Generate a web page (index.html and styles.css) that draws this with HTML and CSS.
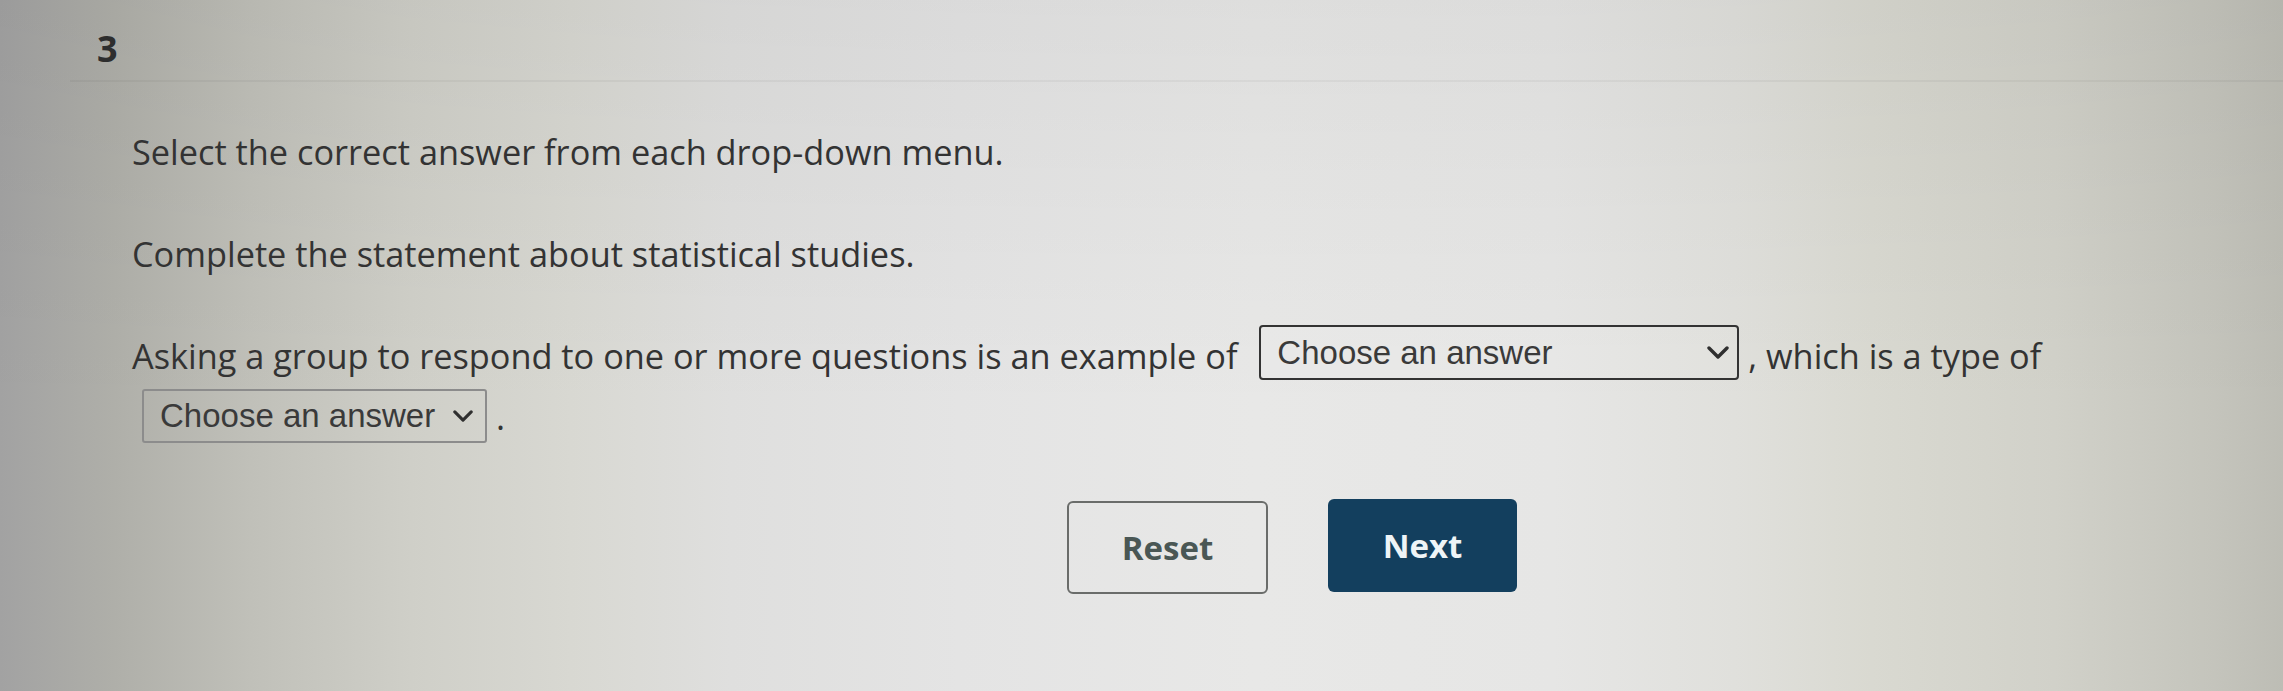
FILE: index.html
```html
<!DOCTYPE html>
<html lang="en">
<head>
<meta charset="utf-8">
<title>Question 3</title>
<link rel="stylesheet" href="styles.css">
</head>
<body>
<div class="page">
  <header class="qhead">
    <span class="qnum">3</span>
  </header>
  <main class="qbody">
    <p class="instr">Select the correct answer from each drop-down menu.</p>
    <p class="prompt">Complete the statement about statistical studies.</p>
    <p class="statement">Asking a group to respond to one or more questions is an example of <span class="dd dd-wide"><span class="dd-text">Choose an answer</span><svg class="chev" viewBox="0 0 22 13" width="22" height="13"><path d="M2 2 L11 11 L20 2" fill="none" stroke="#2f2f2f" stroke-width="3.4" stroke-linecap="round" stroke-linejoin="round"/></svg></span> , which is a type of <span class="dd dd-small"><span class="dd-text">Choose an answer</span><svg class="chev" viewBox="0 0 22 13" width="20" height="12"><path d="M2 2 L11 11 L20 2" fill="none" stroke="#2f2f2f" stroke-width="3.4" stroke-linecap="round" stroke-linejoin="round"/></svg></span> .</p>
    <div class="actions">
      <button class="btn btn-reset" type="button">Reset</button>
      <button class="btn btn-next" type="button">Next</button>
    </div>
  </main>
</div>
</body>
</html>
```

FILE: styles.css
```css
html, body {
  margin: 0;
  padding: 0;
}
body {
  width: 2283px;
  height: 691px;
  overflow: hidden;
  font-family: "Open Sans", "Noto Sans", sans-serif;
  color: #333;
  background:
    linear-gradient(to bottom, rgba(0,0,0,0.045) 0%, rgba(0,0,0,0.02) 30%, rgba(0,0,0,0) 60%),
    linear-gradient(to right,
      #a2a2a2 0%,
      #afafa9 5%,
      #c0c0b9 11%,
      #cfcfc8 18%,
      #d8d8d2 25%,
      #dfdfde 32%,
      #e4e4e4 42%,
      #e8e8e7 55%,
      #e6e6e5 68%,
      #e0e0dc 76%,
      #d9d9d1 82%,
      #d1d1c9 90%,
      #c4c4bc 97%,
      #bdbdb5 100%);
}
.page {
  display: flex;
  flex-direction: column;
}
.qhead {
  margin-left: 70px;
  padding: 24px 0 6px 27px;
  border-bottom: 2px solid rgba(0,0,0,0.04);
}
.qnum {
  display: block;
  font-size: 36px;
  font-weight: 700;
  line-height: 50px;
  color: #2e2e2e;
}
.qbody {
  padding-left: 132px;
  padding-right: 40px;
}
.qbody p {
  margin: 0;
  font-size: 34.3px;
}
.instr {
  line-height: 48px;
  margin-top: 46px !important;
  margin-bottom: 54px !important;
}
.prompt {
  line-height: 48px;
  margin-bottom: 47px !important;
}
.statement {
  line-height: 61px;
}
.dd {
  display: inline-flex;
  align-items: center;
  justify-content: space-between;
  box-sizing: border-box;
  font-family: "Liberation Sans", Arial, sans-serif;
  font-size: 33px;
  line-height: 1;
  color: #3a3a3a;
  border-radius: 4px;
}
.dd-wide {
  width: 480px;
  height: 55px;
  border: 2px solid #333;
  padding: 0 8px 0 16px;
  margin: 0 0 0 13px;
  vertical-align: 5px;
  background: rgba(255,255,255,0.08);
}
.dd-small {
  width: 345px;
  height: 54px;
  border: 2px solid #8c8c8c;
  padding: 0 12px 0 16px;
  margin: 0 0 0 10px;
  vertical-align: 3px;
  border-radius: 3px;
}
.dd-text {
  display: block;
}
.chev {
  display: block;
  flex: none;
}
.actions {
  display: flex;
  gap: 60px;
  padding-left: 935px;
  margin-top: 54px;
  align-items: flex-start;
}
.btn {
  font-family: "Open Sans", "Noto Sans", sans-serif;
  font-size: 33px;
  font-weight: 700;
  height: 93px;
  border-radius: 6px;
  box-sizing: border-box;
  cursor: pointer;
}
.btn-reset {
  width: 201px;
  background: transparent;
  border: 2px solid #6a6c6a;
  color: #4a5755;
}
.btn-next {
  width: 189px;
  background: #133f5e;
  border: none;
  color: #eef4f7;
  margin-top: -2px;
}
```
